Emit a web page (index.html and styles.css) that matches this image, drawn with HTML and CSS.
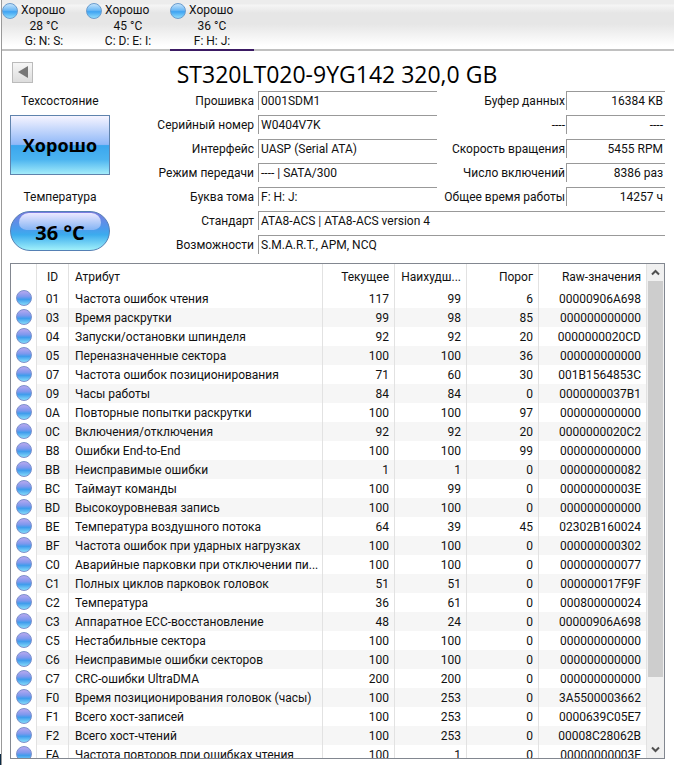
FILE: index.html
```html
<!DOCTYPE html>
<html lang="ru">
<head>
  <meta charset="UTF-8" />
  <title>ST320LT020-9YG142 320,0 GB</title>
  <link rel="stylesheet" href="styles.css">
</head>
<body>

  <nav class="disks">
    <button class="disk"><span class="disk-state"><i class="ball"></i>Хорошо</span><span>28 °C</span><span>G: N: S:</span></button>
    <button class="disk"><span class="disk-state"><i class="ball"></i>Хорошо</span><span>45 °C</span><span>C: D: E: I:</span></button>
    <button class="disk active"><span class="disk-state"><i class="ball"></i>Хорошо</span><span>36 °C</span><span>F: H: J:</span></button>
  </nav>

  <main>
    <header class="title">
      <button class="prev" aria-label="Предыдущий диск">
        <svg width="10" height="12" viewBox="0 0 10 12"><path d="M0 6 L10 0 V12 Z" fill="#777"/></svg>
      </button>
      <h1>ST320LT020-9YG142 320,0 GB</h1>
    </header>

    <section class="summary">
      <div class="status">
        <span class="caption">Техсостояние</span>
        <button class="health">Хорошо</button>
        <span class="caption">Температура</span>
        <button class="temp">36 °C</button>
      </div>

      <dl class="info">
        <dt>Прошивка</dt><dd>0001SDM1</dd>
        <dt>Буфер данных</dt><dd class="right">16384 KB</dd>
        <dt>Серийный номер</dt><dd>W0404V7K</dd>
        <dt>----</dt><dd class="right">----</dd>
        <dt>Интерфейс</dt><dd>UASP (Serial ATA)</dd>
        <dt>Скорость вращения</dt><dd class="right">5455 RPM</dd>
        <dt>Режим передачи</dt><dd>---- | SATA/300</dd>
        <dt>Число включений</dt><dd class="right">8386 раз</dd>
        <dt>Буква тома</dt><dd>F: H: J:</dd>
        <dt>Общее время работы</dt><dd class="right">14257 ч</dd>
        <dt>Стандарт</dt><dd class="wide">ATA8-ACS | ATA8-ACS version 4</dd>
        <dt>Возможности</dt><dd class="wide">S.M.A.R.T., APM, NCQ</dd>
      </dl>
    </section>

    <section class="list">
      <div class="rows">
        <table>
          <colgroup>
            <col class="c-dot"><col class="c-id"><col><col class="c-num"><col class="c-num"><col class="c-num"><col class="c-raw">
          </colgroup>
          <thead>
            <tr><th></th><th>ID</th><th>Атрибут</th><th>Текущее</th><th>Наихудш...</th><th>Порог</th><th>Raw-значения</th></tr>
          </thead>
          <tbody>
            <tr><td><i class="dot"></i></td><td>01</td><td>Частота ошибок чтения</td><td>117</td><td>99</td><td>6</td><td>00000906A698</td></tr>
            <tr><td><i class="dot"></i></td><td>03</td><td>Время раскрутки</td><td>99</td><td>98</td><td>85</td><td>000000000000</td></tr>
            <tr><td><i class="dot"></i></td><td>04</td><td>Запуски/остановки шпинделя</td><td>92</td><td>92</td><td>20</td><td>0000000020CD</td></tr>
            <tr><td><i class="dot"></i></td><td>05</td><td>Переназначенные сектора</td><td>100</td><td>100</td><td>36</td><td>000000000000</td></tr>
            <tr><td><i class="dot"></i></td><td>07</td><td>Частота ошибок позиционирования</td><td>71</td><td>60</td><td>30</td><td>001B1564853C</td></tr>
            <tr><td><i class="dot"></i></td><td>09</td><td>Часы работы</td><td>84</td><td>84</td><td>0</td><td>0000000037B1</td></tr>
            <tr><td><i class="dot"></i></td><td>0A</td><td>Повторные попытки раскрутки</td><td>100</td><td>100</td><td>97</td><td>000000000000</td></tr>
            <tr><td><i class="dot"></i></td><td>0C</td><td>Включения/отключения</td><td>92</td><td>92</td><td>20</td><td>0000000020C2</td></tr>
            <tr><td><i class="dot"></i></td><td>B8</td><td>Ошибки End-to-End</td><td>100</td><td>100</td><td>99</td><td>000000000000</td></tr>
            <tr><td><i class="dot"></i></td><td>BB</td><td>Неисправимые ошибки</td><td>1</td><td>1</td><td>0</td><td>000000000082</td></tr>
            <tr><td><i class="dot"></i></td><td>BC</td><td>Таймаут команды</td><td>100</td><td>99</td><td>0</td><td>00000000003E</td></tr>
            <tr><td><i class="dot"></i></td><td>BD</td><td>Высокоуровневая запись</td><td>100</td><td>100</td><td>0</td><td>000000000000</td></tr>
            <tr><td><i class="dot"></i></td><td>BE</td><td>Температура воздушного потока</td><td>64</td><td>39</td><td>45</td><td>02302B160024</td></tr>
            <tr><td><i class="dot"></i></td><td>BF</td><td>Частота ошибок при ударных нагрузках</td><td>100</td><td>100</td><td>0</td><td>000000000302</td></tr>
            <tr><td><i class="dot"></i></td><td>C0</td><td>Аварийные парковки при отключении пи...</td><td>100</td><td>100</td><td>0</td><td>000000000077</td></tr>
            <tr><td><i class="dot"></i></td><td>C1</td><td>Полных циклов парковок головок</td><td>51</td><td>51</td><td>0</td><td>000000017F9F</td></tr>
            <tr><td><i class="dot"></i></td><td>C2</td><td>Температура</td><td>36</td><td>61</td><td>0</td><td>000800000024</td></tr>
            <tr><td><i class="dot"></i></td><td>C3</td><td>Аппаратное ECC-восстановление</td><td>48</td><td>24</td><td>0</td><td>00000906A698</td></tr>
            <tr><td><i class="dot"></i></td><td>C5</td><td>Нестабильные сектора</td><td>100</td><td>100</td><td>0</td><td>000000000000</td></tr>
            <tr><td><i class="dot"></i></td><td>C6</td><td>Неисправимые ошибки секторов</td><td>100</td><td>100</td><td>0</td><td>000000000000</td></tr>
            <tr><td><i class="dot"></i></td><td>C7</td><td>CRC-ошибки UltraDMA</td><td>200</td><td>200</td><td>0</td><td>000000000000</td></tr>
            <tr><td><i class="dot"></i></td><td>F0</td><td>Время позиционирования головок (часы)</td><td>100</td><td>253</td><td>0</td><td>3A5500003662</td></tr>
            <tr><td><i class="dot"></i></td><td>F1</td><td>Всего хост-записей</td><td>100</td><td>253</td><td>0</td><td>0000639C05E7</td></tr>
            <tr><td><i class="dot"></i></td><td>F2</td><td>Всего хост-чтений</td><td>100</td><td>253</td><td>0</td><td>00008C28062B</td></tr>
            <tr><td><i class="dot"></i></td><td>FA</td><td>Частота повторов при ошибках чтения</td><td>100</td><td>1</td><td>0</td><td>00000000003F</td></tr>
          </tbody>
        </table>
      </div>
      <div class="scroll">
        <button aria-label="Вверх"><svg width="9" height="7" viewBox="0 0 9 7"><path d="M1 5.5 L4.5 2 L8 5.5" fill="none" stroke="#505050" stroke-width="2"/></svg></button>
        <div class="track"><div class="thumb"></div></div>
        <button aria-label="Вниз"><svg width="9" height="7" viewBox="0 0 9 7"><path d="M1 1.5 L4.5 5 L8 1.5" fill="none" stroke="#505050" stroke-width="2"/></svg></button>
      </div>
    </section>
  </main>

</body>
</html>
```
FILE: styles.css
```css
* {
  box-sizing: border-box;
}
html {
  background: linear-gradient(#0b2a45, #0b2a45) left bottom / 2px 11px no-repeat #fff;
}
body {
  margin: 0 0 0 1px;
  height: 100vh;
  display: flex;
  flex-direction: column;
  border-left: 1px solid #999;
  color: #111;
  font-family: Roboto, "Segoe UI", "Open Sans", sans-serif;
  font-size: 12px;
  line-height: 16px;
}
button {
  margin: 0;
  padding: 0;
  border: none;
  background: none;
  color: inherit;
  font: inherit;
}

/* disk tabs */
.disks {
  display: flex;
  height: 51px;
  flex-shrink: 0;
  background: linear-gradient(#ececec, #ececec 4px, #f5f5f5 5px, #e6e6e6 13px, #e6e6e6 24px, #fff 46px);
  box-shadow: inset 0 -2px #c0c0c0;
}
.disk {
  width: 84px;
  padding-top: 3px;
  display: flex;
  flex-direction: column;
  line-height: 15px;
  border-bottom: 2px solid transparent;
}
.disk span {
  width: 100%;
  text-align: center;
}
.disk.active {
  border-color: #3b1a63;
}
.disk .disk-state {
  display: flex;
  gap: 3px;
}
.ball {
  width: 16px;
  height: 16px;
  border-radius: 50%;
  border: 1px solid #6a9cce;
  background: linear-gradient(#c4e4fc, #6bb8f5 45%, #3ea3f2 55%, #8fdcfc);
}

main {
  flex: 1;
  min-height: 0;
  display: flex;
  flex-direction: column;
  padding: 8px 9px 6px 8px;
}
.title {
  display: flex;
  align-items: center;
  height: 30px;
}
.prev {
  width: 21px;
  height: 21px;
  margin: 0 0 4px 2px;
  display: flex;
  align-items: center;
  justify-content: center;
  border: 1px solid #bbb;
  background: linear-gradient(#f6f6f6, #ddd);
}
h1 {
  flex: 1;
  margin: 0 24px 0 0;
  text-align: center;
  font-family: "Open Sans", "Segoe UI", sans-serif;
  font-size: 23px;
  line-height: 30px;
  font-weight: normal;
  color: #000;
}

/* status and drive info */
.summary {
  display: flex;
  margin-top: 2px;
}
.status {
  width: 100px;
  display: flex;
  flex-direction: column;
}
.caption {
  height: 24px;
  line-height: 20px;
  text-align: center;
}
.health,
.temp {
  font-family: "Open Sans", "Segoe UI", sans-serif;
  font-size: 18px;
  font-weight: bold;
  color: #000;
}
.health {
  height: 60px;
  margin-bottom: 12px;
  border: 1px solid #5f83ad;
  background: linear-gradient(#f6f4ff, #8fb8f8 49%, #3aa6ee 51%, #4cb4f0 75%, #a4ecfa);
}
.temp {
  position: relative;
  z-index: 0;
  height: 40px;
  padding-top: 4px;
  font-size: 20px;
  border: 1px solid #5580b4;
  border-radius: 20px;
  background: linear-gradient(#7b7be0, #4a9cec 45%, #3cacee 60%, #a0f0fa);
}
/* glass highlight */
.temp::before {
  content: "";
  position: absolute;
  z-index: -1;
  inset: 1px 8px 20px;
  border-radius: 12px 12px 9px 9px;
  background: linear-gradient(#ece8ff, #84b4f4);
}
.info {
  flex: 1;
  margin: 0;
  display: grid;
  grid-template-columns: 144px 1fr 128px 100px;
  grid-auto-rows: 19px;
  row-gap: 5px;
}
dt {
  line-height: 20px;
  text-align: right;
}
dd {
  margin: 0 0 0 4px;
  padding-left: 2px;
  line-height: 18px;
  border: 1px solid #999;
  border-width: 1px 0 0 1px;
}
dd.right {
  margin-left: 1px;
  padding-right: 2px;
  text-align: right;
}
dd.wide {
  grid-column: span 3;
}

/* attribute list */
.list {
  flex: 1;
  min-height: 0;
  display: flex;
  margin-top: 9px;
  border: 1px solid #828790;
}
.rows {
  flex: 1;
  overflow: hidden;
}
table {
  width: 100%;
  table-layout: fixed;
  border-collapse: separate;
  border-spacing: 0;
}
.c-dot {
  width: 26px;
}
.c-id {
  width: 32px;
}
.c-num {
  width: 72px;
}
.c-raw {
  width: 108px;
}
th,
td {
  height: 19px;
  padding: 0 5px 0 6px;
  border-right: 1px solid #e2e2e2;
  line-height: 18px;
  font-weight: normal;
  text-align: right;
  white-space: nowrap;
}
th {
  height: 25px;
}
th:nth-child(1),
td:nth-child(1) {
  padding: 0 0 0 5px;
  vertical-align: top;
}
th:nth-child(2),
td:nth-child(2) {
  padding: 0;
  text-align: center;
}
th:nth-child(3),
td:nth-child(3) {
  padding-right: 0;
  text-align: left;
}
tbody tr:nth-child(even) td:not(:first-child) {
  background: #f6f6f6;
}
.dot {
  display: block;
  width: 16px;
  height: 16px;
  margin-top: 1px;
  border: 1px solid #7c90cc;
  border-radius: 50%;
  background: linear-gradient(#b8a8f0, #7d98ee 40%, #3f9cec 60%, #86dcfa);
}

.scroll {
  width: 17px;
  display: flex;
  flex-direction: column;
  background: #f0f0f0;
}
.scroll button {
  height: 17px;
  display: flex;
  align-items: center;
  justify-content: center;
}
.track {
  flex: 1;
}
.thumb {
  height: 86%;
  margin: 0 1px;
  background: #cdcdcd;
}
```
